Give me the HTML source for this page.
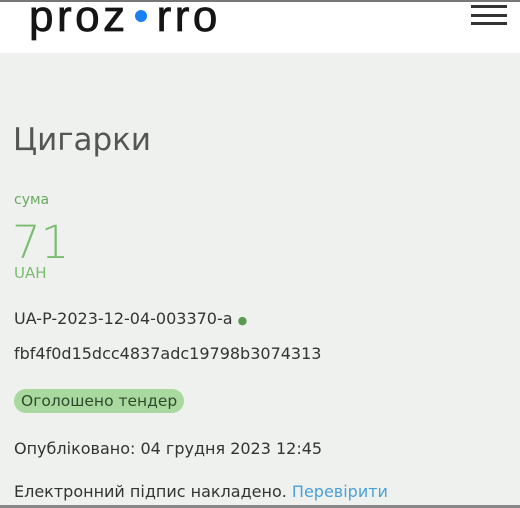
<!DOCTYPE html><html><head><meta charset="utf-8"><style>
body{margin:0;width:520px;height:508px;overflow:hidden;background:#eef1ee;font-family:"DejaVu Sans","Liberation Sans",sans-serif;position:relative}
.hdr{position:absolute;left:0;top:0;width:520px;height:53px;background:#fff;border-top:2px solid #777;box-sizing:border-box}
.t{position:absolute;white-space:nowrap}
.bar{position:absolute;left:471px;width:36px;height:3px;background:#333}
</style></head><body>
<div class="hdr"></div>
<div class="t" style="left:29px;top:-8px;font-size:44px;color:#151515;letter-spacing:3.5px;font-family:'Liberation Sans',sans-serif;-webkit-text-stroke:0.8px #151515">proz<span style="display:inline-block;width:12px;height:12px;border-radius:50%;background:#1a7ff0;margin:0 10px 6px 6px;vertical-align:middle;-webkit-text-stroke:0"></span>rro</div>
<div class="bar" style="top:5px"></div><div class="bar" style="top:14px"></div><div class="bar" style="top:22px"></div>
<div class="t" style="left:13px;top:122px;font-size:31px;color:#555">Цигарки</div>
<div class="t" style="left:14px;top:192px;font-size:14px;color:#6aaa60">сума</div>
<div class="t" style="left:12px;top:216px;font-size:45px;color:#7cbb72;font-weight:300">71</div>
<div class="t" style="left:14px;top:264px;font-size:15px;color:#7cbb72">UAH</div>
<div class="t" style="left:14px;top:309px;font-size:16px;color:#333">UA-P-2023-12-04-003370-a <span style="color:#5a9a50;font-size:11px">●</span></div>
<div class="t" style="left:14px;top:344px;font-size:16px;color:#333">fbf4f0d15dcc4837adc19798b3074313</div>
<div class="t" style="left:14px;top:389px;height:24px;line-height:24px;padding:0 7px;border-radius:12px;background:#a9d99f;font-size:15.5px;color:#2e4a2c">Оголошено тендер</div>
<div class="t" style="left:14px;top:439px;font-size:16px;color:#333">Опубліковано: 04 грудня 2023 12:45</div>
<div class="t" style="left:14px;top:482px;font-size:16px;color:#333">Електронний підпис накладено. <span style="color:#4aa0d8">Перевірити</span></div>
<div style="position:absolute;left:0;top:505px;width:520px;height:3px;background:#888"></div>
</body></html>
